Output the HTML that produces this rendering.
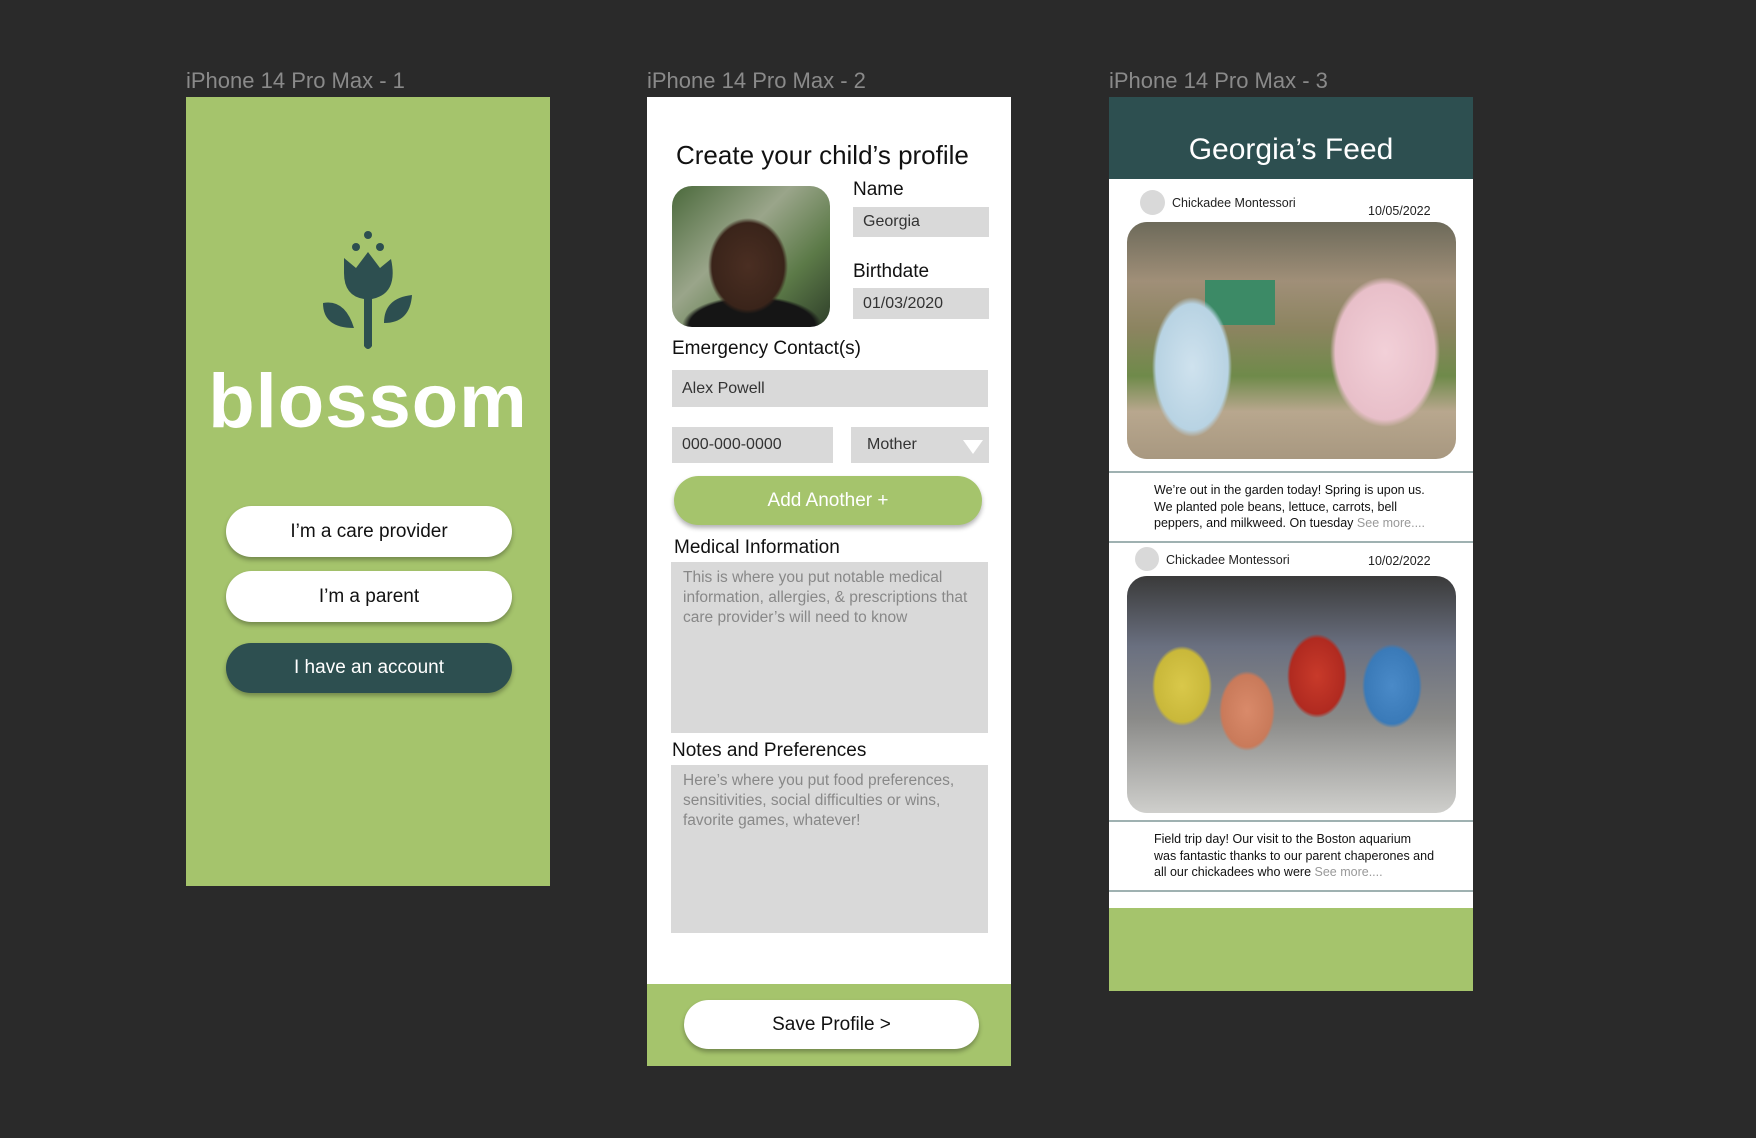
<!DOCTYPE html>
<html><head><meta charset="utf-8"><style>
*{margin:0;padding:0;box-sizing:border-box}
body{width:1756px;height:1138px;background:#2a2a2a;position:relative;overflow:hidden;font-family:"Liberation Sans",sans-serif}
.a{position:absolute}
.lbl{color:#8a8a8a;font-size:22px;top:68px}
.fr{background:#a5c46c}
.btn{position:absolute;border-radius:26px;text-align:center;font-size:19px;box-shadow:0 3px 5px rgba(0,0,0,.3)}
.inp{position:absolute;background:#d9d9d9;color:#333;font-size:16px;padding-left:10px;display:flex;align-items:center}
.fl{position:absolute;font-size:19px;color:#111}
.ta{position:absolute;background:#d9d9d9;color:#888;font-size:15.5px;line-height:20px;padding:6px 12px}
.line{position:absolute;left:1109px;width:364px;height:2px;background:#9fb1b1}
.av{position:absolute;border-radius:50%;background:#d9d9d9}
.sm{position:absolute;font-size:12.5px;color:#222}
.pt{position:absolute;font-size:12.5px;line-height:16.5px;color:#111;width:282px}
</style></head><body>
<div class="a lbl" style="left:186px">iPhone 14 Pro Max - 1</div>
<div class="a lbl" style="left:647px">iPhone 14 Pro Max - 2</div>
<div class="a lbl" style="left:1109px">iPhone 14 Pro Max - 3</div>

<!-- frame 1 -->
<div class="a fr" style="left:186px;top:97px;width:364px;height:789px"></div>
<svg class="a" style="left:320px;top:228px" width="96" height="124" viewBox="0 0 96 124">
<g fill="#2d4f50">
<circle cx="48" cy="7" r="4"/><circle cx="36" cy="19" r="4"/><circle cx="60" cy="19" r="4"/>
<path d="M24 30 L36 40 L48 24 L60 40 L71 31 Q78 63 56 70 L52 71 L52 118 Q48 124 44 118 L44 71 Q24 68 24 45 Z"/>
<path d="M3 75 Q25 71 34 100 Q3 100 3 75Z"/>
<path d="M92 67 Q90 95 64 95 Q64 70 92 67Z"/>
</g></svg>
<div class="a" style="left:186px;width:364px;top:358px;text-align:center;color:#fff;font-weight:bold;font-size:76px;letter-spacing:1px">blossom</div>
<div class="btn" style="left:226px;top:506px;width:286px;height:51px;line-height:51px;background:#fff;color:#111">I’m a care provider</div>
<div class="btn" style="left:226px;top:571px;width:286px;height:51px;line-height:51px;background:#fff;color:#111">I’m a parent</div>
<div class="btn" style="left:226px;top:643px;width:286px;height:50px;line-height:50px;background:#2d4f50;color:#fff">I have an account</div>

<!-- frame 2 -->
<div class="a" style="left:647px;top:97px;width:364px;height:969px;background:#fff"></div>
<div class="a" style="left:676px;top:140px;font-size:26px;color:#111">Create your child’s profile</div>
<div class="a" style="left:672px;top:186px;width:158px;height:141px;border-radius:20px;overflow:hidden;background:radial-gradient(ellipse 40px 48px at 76px 80px,#4a2e22 0,#3a241a 90%,transparent 100%),radial-gradient(ellipse 70px 30px at 80px 140px,#151515 0,#151515 90%,transparent 100%),linear-gradient(135deg,#4b6a3c,#9aa58a 40%,#5c7a48 70%,#2f3f2a)"></div>
<div class="fl" style="left:853px;top:179px">Name</div>
<div class="inp" style="left:853px;top:207px;width:136px;height:30px">Georgia</div>
<div class="fl" style="left:853px;top:261px">Birthdate</div>
<div class="inp" style="left:853px;top:288px;width:136px;height:31px">01/03/2020</div>
<div class="fl" style="left:672px;top:338px">Emergency Contact(s)</div>
<div class="inp" style="left:672px;top:370px;width:316px;height:37px">Alex Powell</div>
<div class="inp" style="left:672px;top:427px;width:161px;height:36px">000-000-0000</div>
<div class="inp" style="left:851px;top:427px;width:138px;height:36px;padding-left:16px">Mother</div>
<div class="a" style="left:963px;top:440px;width:0;height:0;border-left:10px solid transparent;border-right:10px solid transparent;border-top:14px solid #fff"></div>
<div class="btn" style="left:674px;top:476px;width:308px;height:49px;line-height:49px;background:#a5c46c;color:#fff">Add Another +</div>
<div class="fl" style="left:674px;top:537px">Medical Information</div>
<div class="ta" style="left:671px;top:562px;width:317px;height:171px">This is where you put notable medical information, allergies, &amp; prescriptions that care provider’s will need to know</div>
<div class="fl" style="left:672px;top:740px">Notes and Preferences</div>
<div class="ta" style="left:671px;top:765px;width:317px;height:168px">Here’s where you put food preferences, sensitivities, social difficulties or wins, favorite games, whatever!</div>
<div class="a fr" style="left:647px;top:984px;width:364px;height:82px"></div>
<div class="btn" style="left:684px;top:1000px;width:295px;height:49px;line-height:49px;background:#fff;color:#111">Save Profile &gt;</div>

<!-- frame 3 -->
<div class="a" style="left:1109px;top:97px;width:364px;height:894px;background:#fff"></div>
<div class="a" style="left:1109px;top:97px;width:364px;height:82px;background:#2d4f50;color:#fff;font-size:30px;text-align:center;line-height:106px">Georgia’s Feed</div>
<div class="av" style="left:1140px;top:190px;width:25px;height:25px"></div>
<div class="sm" style="left:1172px;top:196px">Chickadee Montessori</div>
<div class="sm" style="left:1368px;top:204px">10/05/2022</div>
<div class="a" style="left:1127px;top:222px;width:329px;height:237px;border-radius:20px;overflow:hidden;background:
radial-gradient(ellipse 40px 70px at 65px 145px,#cfe2ee 0,#b8d3e3 90%,transparent 100%),
radial-gradient(ellipse 55px 75px at 258px 130px,#f2d0d8 0,#e8bfc9 90%,transparent 100%),
linear-gradient(#3c8a66,#3c8a66) 78px 58px/70px 45px no-repeat,
linear-gradient(180deg,#6d6a5a 0,#a08f78 25%,#8c8460 45%,#6f8a4a 65%,#b8a78e 80%,#a89880 100%)"></div>
<div class="line" style="top:471px"></div>
<div class="pt" style="left:1154px;top:482px">We’re out in the garden today! Spring is upon us. We planted pole beans, lettuce, carrots, bell peppers, and milkweed. On tuesday <span style="color:#999">See more....</span></div>
<div class="line" style="top:541px"></div>
<div class="av" style="left:1135px;top:547px;width:24px;height:24px"></div>
<div class="sm" style="left:1166px;top:553px">Chickadee Montessori</div>
<div class="sm" style="left:1368px;top:554px">10/02/2022</div>
<div class="a" style="left:1127px;top:576px;width:329px;height:237px;border-radius:20px;overflow:hidden;background:
radial-gradient(ellipse 30px 40px at 55px 110px,#d9c84a 0,#c9b83a 90%,transparent 100%),
radial-gradient(ellipse 28px 40px at 120px 135px,#d98a6a 0,#c97a5a 90%,transparent 100%),
radial-gradient(ellipse 30px 42px at 190px 100px,#c83a2a 0,#b02a20 90%,transparent 100%),
radial-gradient(ellipse 30px 42px at 265px 110px,#4a8ac8 0,#3a7ab8 90%,transparent 100%),
linear-gradient(180deg,#3a3a3a 0,#6a7080 30%,#8a8a88 60%,#cfcfcc 100%)"></div>
<div class="line" style="top:820px"></div>
<div class="pt" style="left:1154px;top:831px">Field trip day! Our visit to the Boston aquarium was fantastic thanks to our parent chaperones and all our chickadees who were <span style="color:#999">See more....</span></div>
<div class="line" style="top:890px"></div>
<div class="a fr" style="left:1109px;top:908px;width:364px;height:83px"></div>
</body></html>
